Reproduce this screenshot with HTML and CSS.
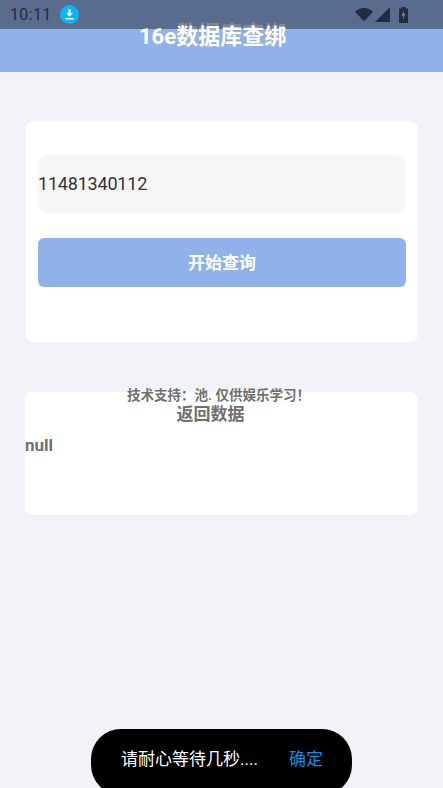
FILE: index.html
```html
<!DOCTYPE html>
<html lang="zh">
<head>
<meta charset="utf-8">
<title>16e数据库查绑</title>
<link rel="stylesheet" href="styles.css">
</head>
<body>
<div class="page">
  <div class="status">
    <div class="status-left">
      <span class="time">10:11</span>
      <svg class="dl" width="19" height="19" viewBox="0 0 19 19"><circle cx="9.5" cy="9.5" r="9.5" fill="#0ab4f5"/><path d="M8.3 4.3h2.4v4h2.2l-3.400 3.300-3.400-3.300h2.200zM5.500 13h8v1.400h-8z" fill="#fff"/></svg>
    </div>
    <div class="status-right">
      <svg width="18" height="15" viewBox="0 0 19 15"><path d="M0 4.500C2.500 2 5.800.6 9.500.6S16.500 2 19 4.500L9.500 14.600z" fill="#222c3e"/></svg>
      <svg width="15" height="15" viewBox="0 0 15 15"><path d="M15 0v15H0z" fill="#222c3e"/></svg>
      <svg class="batt" width="9" height="16" viewBox="0 0 9 16"><path d="M2.500 0h4v1.500H9V16H0V1.500h2.500z" fill="#222c3e"/><path d="M5 3.500 2.600 8.500h1.700L3.800 12.500 6.400 7H4.700z" fill="#7f8ca5"/></svg>
    </div>
  </div>
  <header class="bar">
    <span class="ghost">数据库查绑</span>
    <h1 class="title">16e数据库查绑</h1>
  </header>
  <main class="content">
    <section class="card query">
      <div class="field">11481340112</div>
      <button class="go" type="button">开始查询</button>
    </section>
    <section class="card result">
      <p class="support">技术支持：池. 仅供娱乐学习！</p>
      <h2 class="result-title">返回数据</h2>
      <p class="null">null</p>
    </section>
  </main>
  <div class="toast">
    <span class="toast-msg">请耐心等待几秒....</span>
    <span class="toast-ok">确定</span>
  </div>
</div>
</body>
</html>
```

FILE: styles.css
```css
* { box-sizing: border-box; }
html, body { margin: 0; padding: 0; }
body {
  width: 443px;
  height: 788px;
  overflow: hidden;
  background: #f1f3f9;
  font-family: Roboto, "Noto Sans CJK SC", sans-serif;
}
.page {
  position: relative;
  height: 788px;
  display: flex;
  flex-direction: column;
}
.status {
  position: relative;
  height: 29px;
  flex: none;
  background: #596c8e;
  display: flex;
  justify-content: space-between;
  align-items: center;
  padding: 0 35px 0 10px;
}
.status-left { display: flex; align-items: center; gap: 8px; }
.time { font-size: 16px; letter-spacing: .35px; color: #222c3e; }
.status-right { display: flex; align-items: center; gap: 2px; }
.batt { margin-left: 7px; }
.bar {
  position: relative;
  height: 43px;
  flex: none;
  background: #90b2ea;
  display: flex;
  justify-content: flex-start;
  padding-left: 139px;
}
.title {
  margin: -5px 0 0;
  position: relative;
  font-size: 22px;
  line-height: 25px;
  height: 25px;
  font-weight: 700;
  color: #fff;
  white-space: nowrap;
}
.ghost {
  position: absolute;
  left: 176px;
  top: -8px;
  font-size: 22px;
  line-height: 25px;
  font-weight: 700;
  color: rgba(175, 170, 160, .48);
  white-space: nowrap;
}
.content {
  display: flex;
  flex-direction: column;
  padding: 49px 25px 0;
}
.card { background: #fff; border-radius: 8px; }
.query {
  margin-left: 1px;
  height: 221px;
  padding: 34px 12px 0;
}
.field {
  height: 58px;
  border-radius: 10px;
  background: #f6f6f6;
  color: #333;
  font-size: 18px;
  letter-spacing: -.2px;
  line-height: 58px;
}
.go {
  display: block;
  width: 100%;
  height: 49px;
  margin-top: 25px;
  border: 0;
  border-radius: 6px;
  background: #90b2ea;
  color: #fff;
  font: 700 17px/49px Roboto, "Noto Sans CJK SC", sans-serif;
}
.result {
  position: relative;
  height: 123px;
  margin-top: 50px;
  text-align: center;
}
.support {
  position: absolute;
  left: 0;
  right: 6px;
  top: -6px;
  margin: 0;
  font-size: 13.5px;
  line-height: 18px;
  font-weight: 700;
  color: #707070;
  white-space: nowrap;
}
.result-title {
  margin: 0;
  padding-top: 11px;
  padding-right: 22px;
  font-size: 17px;
  line-height: 22px;
  font-weight: 700;
  color: #707070;
}
.null {
  margin: 8px 0 0;
  text-align: left;
  font-size: 17px;
  line-height: 24px;
  font-weight: 700;
  color: #707070;
}
.toast {
  position: absolute;
  left: 91px;
  top: 729px;
  width: 261px;
  height: 66px;
  border-radius: 30px;
  background: #000;
  display: flex;
  align-items: flex-start;
  padding: 18px 0 0 30px;
  font-size: 17px;
  line-height: 24px;
}
.toast-msg { color: #fff; width: 168px; white-space: nowrap; }
.toast-ok { color: #0a90e8; }
```
